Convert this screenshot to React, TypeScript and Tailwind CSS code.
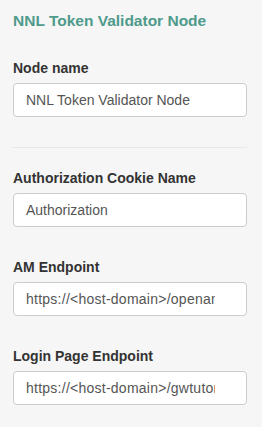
import React from "react";

const fields = [
  { label: "Authorization Cookie Name", value: "Authorization", url: false },
  { label: "AM Endpoint", value: "https://<host-domain>/openam", url: true },
  { label: "Login Page Endpoint", value: "https://<host-domain>/gwtutorial", url: true },
];

function Field({ label, value, url }: { label: string; value: string; url?: boolean }) {
  return (
    <div className="flex flex-col">
      <label className="text-[14px] leading-[20px] font-bold text-[#333333]">{label}</label>
      <input
        readOnly
        value={value}
        className={
          url
            ? "mt-[5px] h-[34px] w-[234px] rounded-[4px] border border-[#cccccc] bg-white pl-[12px] pr-[31px] text-[14px] leading-[20px] tracking-[0.25px] text-[#555555] outline-none"
            : "mt-[5px] h-[34px] w-[234px] rounded-[4px] border border-[#cccccc] bg-white pl-[12px] pr-[31px] text-[14px] leading-[20px] text-[#555555] outline-none"
        }
      />
    </div>
  );
}

export default function App() {
  return (
    <div
      className="w-[262px] h-[427px] bg-[#f6f6f6] pl-[13px] pt-[11px] flex flex-col overflow-hidden"
      style={{ fontFamily: '"Liberation Sans", Arial, sans-serif' }}
    >
      <h1 className="text-[15.5px] leading-[20px] font-bold text-[#4e9a8b] whitespace-nowrap">
        NNL Token Validator Node
      </h1>
      <div className="mt-[27px]">
        <Field label="Node name" value="NNL Token Validator Node" />
      </div>
      <div className="mt-[30px] h-px w-[234px] bg-[#e8e8e8]" />
      <div className="mt-[20px] flex flex-col gap-[30px]">
        {fields.map((f) => (
          <Field key={f.label} label={f.label} value={f.value} url={f.url} />
        ))}
      </div>
    </div>
  );
}
